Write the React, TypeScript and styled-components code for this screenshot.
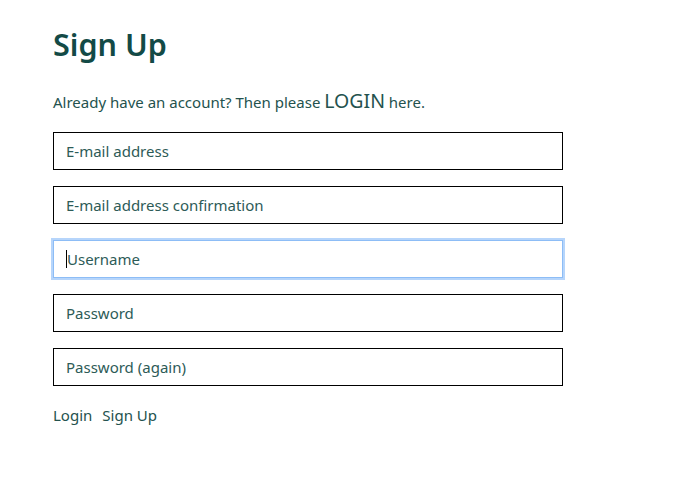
import styled, { createGlobalStyle } from "styled-components";

const GlobalStyle = createGlobalStyle`
  body {
    margin: 0;
    background: #ffffff;
    font-family: "Noto Sans", "Open Sans", sans-serif;
    color: #24524e;
  }
`;

const Page = styled.div`
  padding: 22px 53px;
  width: 510px;
`;

const Title = styled.h1`
  margin: 0;
  font-size: 30.5px;
  font-weight: 600;
  color: #134a46;
  line-height: 44px;
`;

const Intro = styled.p`
  margin: 23px 0 18px;
  font-size: 15px;
  line-height: 24px;
`;

const LoginWord = styled.span`
  font-size: 19.5px;
`;

const Form = styled.form`
  display: flex;
  flex-direction: column;
  gap: 16px;
`;

const Field = styled.div<{ $focused?: boolean }>`
  height: 38px;
  box-sizing: border-box;
  border: 1px solid ${(p) => (p.$focused ? "#8dbdf6" : "#000000")};
  box-shadow: ${(p) => (p.$focused ? "0 0 0 2px #b6d5fb" : "none")};
  display: flex;
  align-items: center;
  padding: 0 12px;
  font-size: 15px;
  color: #2d5b57;
`;

const Caret = styled.span`
  display: inline-block;
  width: 1px;
  height: 18px;
  background: #000;
`;

const Actions = styled.div`
  display: flex;
  gap: 10px;
  margin-top: 19px;
  font-size: 15px;
`;

const fields = [
  "E-mail address",
  "E-mail address confirmation",
  "Username",
  "Password",
  "Password (again)",
];

const App = () => {
  return (
    <>
      <GlobalStyle />
      <Page>
        <Title>Sign Up</Title>
        <Intro>
          Already have an account? Then please <LoginWord>LOGIN</LoginWord> here.
        </Intro>
        <Form>
          {fields.map((f) => (
            <Field key={f} $focused={f === "Username"}>
              {f === "Username" && <Caret />}
              {f}
            </Field>
          ))}
        </Form>
        <Actions>
          <span>Login</span>
          <span>Sign Up</span>
        </Actions>
      </Page>
    </>
  );
};

export default App;
